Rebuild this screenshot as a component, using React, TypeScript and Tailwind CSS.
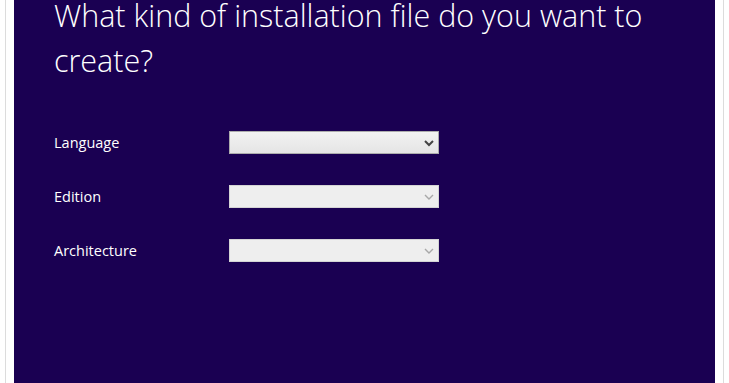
import React from 'react';

function Chevron({ disabled }: { disabled?: boolean }) {
  return (
    <svg width="10" height="8" viewBox="0 0 10 8" className="shrink-0">
      <path
        d="M1 2 L5 6 L9 2"
        fill="none"
        stroke={disabled ? '#a8a8a8' : '#444'}
        strokeWidth={disabled ? 1.4 : 2}
      />
    </svg>
  );
}

function Row({ label, active }: { label: string; active?: boolean }) {
  return (
    <div className="flex items-center h-[23px]">
      <div className="w-[175px] text-[14.5px] text-white">{label}</div>
      <div
        className={
          active
            ? 'w-[210px] h-[23px] border border-[#acacac] bg-gradient-to-b from-[#f2f2f2] to-[#e5e5e5] flex items-center justify-end pr-[4px]'
            : 'w-[210px] h-[23px] border border-[#d4d4d4] bg-[#eeeeee] flex items-center justify-end pr-[4px]'
        }
      >
        <Chevron disabled={!active} />
      </div>
    </div>
  );
}

export default function App() {
  return (
    <div className="h-[383px] w-full bg-white px-[5px] overflow-hidden" style={{ fontFamily: '"Open Sans", "Noto Sans", sans-serif' }}>
      <div className="h-full border-x border-[#dcdcdc] px-[8px]">
        <div className="h-full bg-[#1a0052] pl-[40px] overflow-hidden">
          <h1 className="text-[30.5px] font-light leading-[45px] text-white w-[640px] -mt-[7px]">
            What kind of installation file do you want to create?
          </h1>
          <div className="mt-[48px] flex flex-col gap-[31px]">
            <Row label="Language" active />
            <Row label="Edition" />
            <Row label="Architecture" />
          </div>
        </div>
      </div>
    </div>
  );
}
